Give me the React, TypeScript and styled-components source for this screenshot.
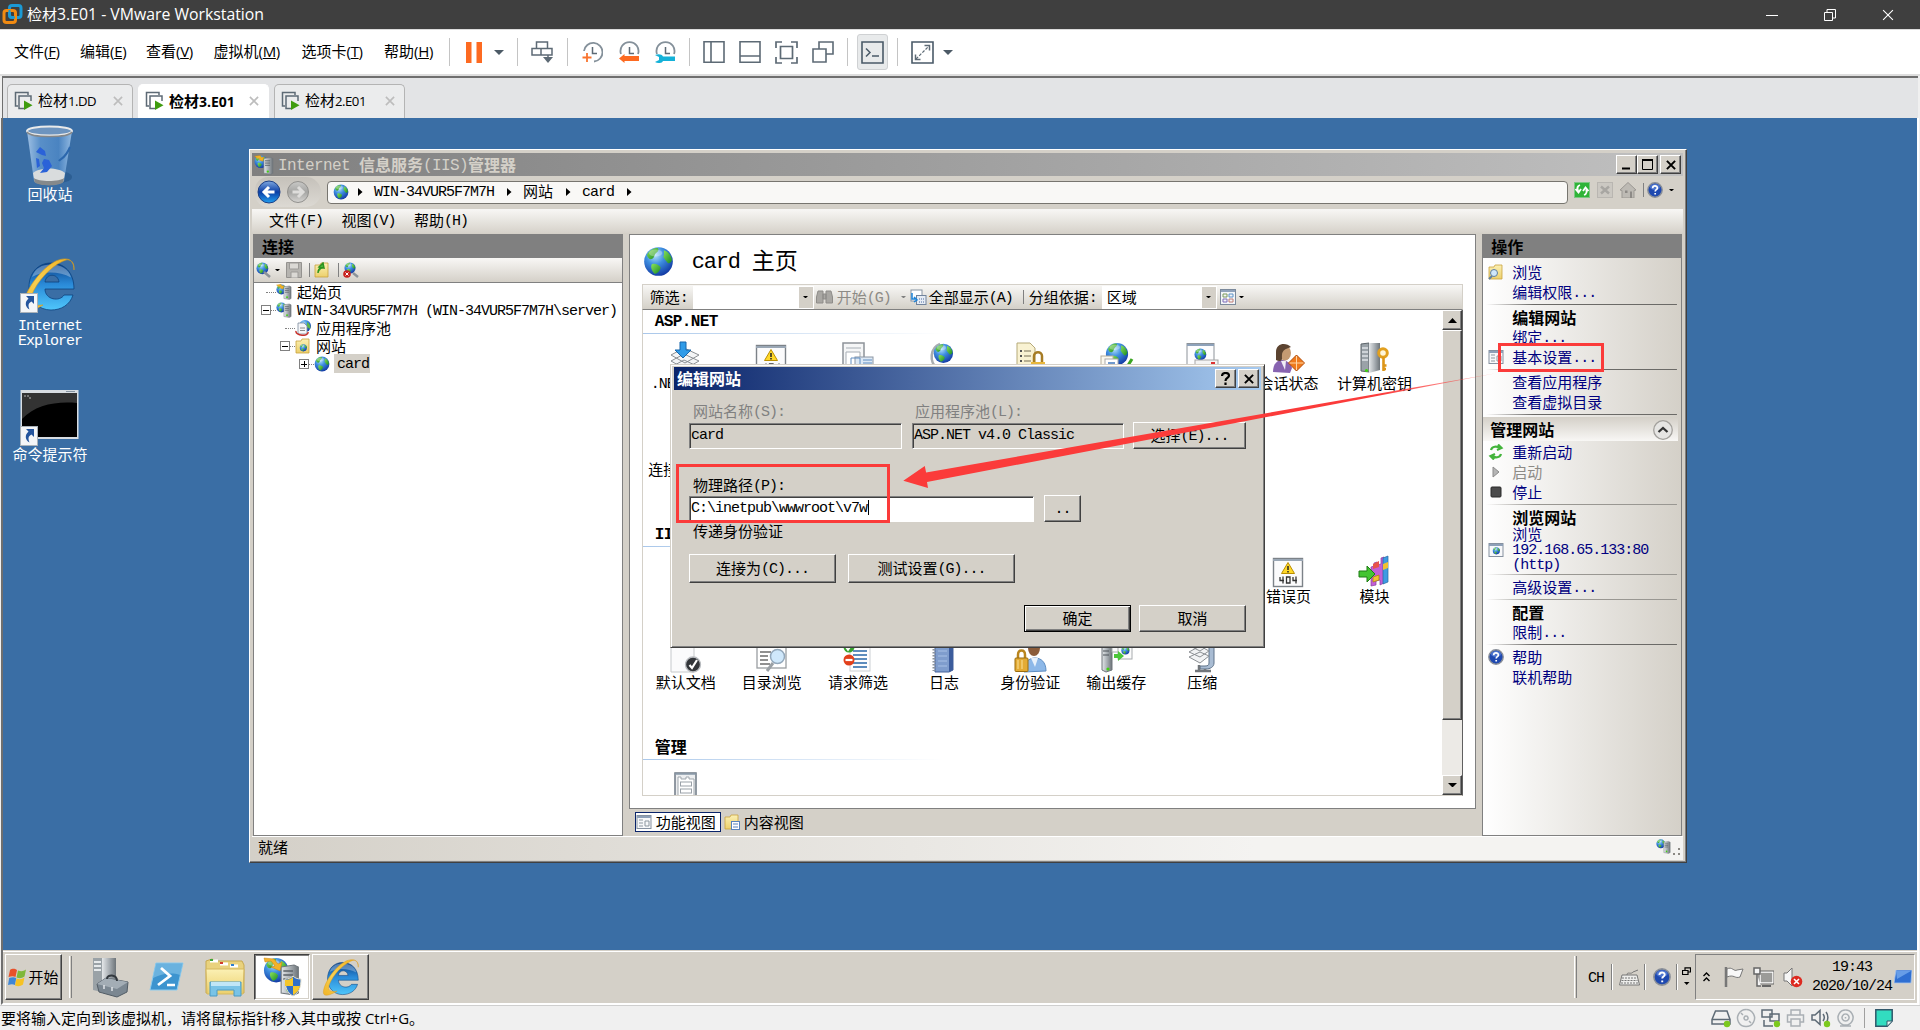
import React from 'react';
import styled, { createGlobalStyle, css } from 'styled-components';

const CJK = "'Noto Sans CJK SC', sans-serif";
const MONO = "'Liberation Mono', 'Noto Sans CJK SC', monospace";
const UI = "'Open Sans', 'Noto Sans CJK SC', sans-serif";
const FACE = '#d4d0c8';

const Global = createGlobalStyle`
  * { box-sizing: border-box; }
  html, body { margin: 0; padding: 0; overflow: hidden; }
  body { width: 1920px; height: 1030px; background: #f0f0f0; font-family: ${CJK}; }
  svg { display: block; flex: none; }
`;

/* ---------- text ---------- */

const TextBox = styled.span<{ $size: number; $bold?: boolean; $color?: string }>`
  display: block;
  flex: none;
  white-space: pre;
  line-height: 1;
  margin: ${p => (p.$bold ? '0' : '-1px 0 1px')};
  font-family: ${CJK};
  font-size: ${p => p.$size}px;
  font-weight: ${p => (p.$bold ? 700 : 400)};
  color: ${p => p.$color || 'inherit'};
`;
const Latin = styled.span<{ $size: number; $ui?: boolean; $ls?: number; $light?: boolean }>`
  line-height: 0;
  font-family: ${p => (p.$ui ? UI : MONO)};
  font-size: ${p => p.$size}px;
  letter-spacing: ${p => p.$ls || 0}px;
  vertical-align: ${p => (p.$ui ? '0' : '1px')};
  ${p => p.$light && css`font-weight: 400;`}
`;
const Key = styled.u`
  text-decoration: underline;
  text-underline-offset: 1px;
`;

type TProps = {
  children: string; size?: number; latin?: number; bold?: boolean; color?: string;
  ui?: boolean; ls?: number; light?: boolean;
};
/* Chinese runs and Latin runs have separate sizes, as in a bitmap UI font. */
const T = ({ children, size, latin, bold, color, ui, ls, light }: TProps) => {
  const cjk = size ?? (bold ? 16 : 15);
  const lat = latin ?? (bold ? 16 : 15);
  const space = ls ?? (ui ? 0 : bold ? -0.6 : -1);
  const runs = children.match(/[\u3000-\u9fff\uff00-\uffef]+|[^\u3000-\u9fff\uff00-\uffef]+/g) || [];
  return (
    <TextBox $size={cjk} $bold={bold} $color={color}>
      {runs.map((r, i) =>
        /[\u3000-\u9fff\uff00-\uffef]/.test(r) ? (
          <React.Fragment key={i}>{r}</React.Fragment>
        ) : (
          <Latin key={i} $size={lat} $ui={ui} $ls={space} $light={light}>{r}</Latin>
        )
      )}
    </TextBox>
  );
};

/* ---------- shared bevels ---------- */

const raised = css`
  background: ${FACE};
  border: 1px solid;
  border-color: #fff #404040 #404040 #fff;
  box-shadow: inset -1px -1px 0 #808080;
`;
const sunken = css`
  border: 1px solid;
  border-color: #808080 #fff #fff #808080;
  box-shadow: inset 1px 1px 0 #404040;
`;

/* ---------- drawings ---------- */

type IcoProps = { w?: number; h?: number; vb?: string; children: React.ReactNode };
const Ico = ({ w = 16, h, vb, children }: IcoProps) => (
  <svg width={w} height={h ?? w} viewBox={vb || `0 0 ${w} ${h ?? w}`} fill="none">{children}</svg>
);

const HiddenSvg = styled.svg`position: absolute;`;
const Defs = () => (
  <HiddenSvg width="0" height="0">
    <defs>
      <radialGradient id="sea" cx=".38" cy=".28" r=".8">
        <stop offset="0" stopColor="#b5e3fb" /><stop offset=".4" stopColor="#3f8fe0" /><stop offset="1" stopColor="#0c2f9c" />
      </radialGradient>
      <linearGradient id="land" x1="0" y1="0" x2="1" y2="1">
        <stop offset="0" stopColor="#8be35b" /><stop offset="1" stopColor="#188a20" />
      </linearGradient>
      <linearGradient id="steel" x1="0" y1="0" x2="1" y2="0">
        <stop offset="0" stopColor="#e4e7e9" /><stop offset=".5" stopColor="#a9afb4" /><stop offset="1" stopColor="#6d7479" />
      </linearGradient>
      <linearGradient id="ie" x1="0" y1="0" x2="0" y2="1">
        <stop offset="0" stopColor="#0a3f86" /><stop offset=".45" stopColor="#2a8ad8" /><stop offset="1" stopColor="#4fc6fb" />
      </linearGradient>
      <linearGradient id="gold" x1="1" y1="0" x2="0" y2="1">
        <stop offset="0" stopColor="#f2b21f" /><stop offset=".6" stopColor="#f7cf52" /><stop offset="1" stopColor="#f0b428" />
      </linearGradient>
      <linearGradient id="folder" x1="0" y1="0" x2="0" y2="1">
        <stop offset="0" stopColor="#fbf0b4" /><stop offset="1" stopColor="#ecd06c" />
      </linearGradient>
      <linearGradient id="blueball" x1="0" y1="0" x2="0" y2="1">
        <stop offset="0" stopColor="#7fa8e0" /><stop offset=".5" stopColor="#0b3ea6" /><stop offset="1" stopColor="#22a0f0" />
      </linearGradient>
      <linearGradient id="greyball" x1="0" y1="0" x2="0" y2="1">
        <stop offset="0" stopColor="#c9c9c7" /><stop offset=".5" stopColor="#a5a5a3" /><stop offset="1" stopColor="#d6d5d2" />
      </linearGradient>
      <linearGradient id="glass" x1="0" y1="0" x2="1" y2="0">
        <stop offset="0" stopColor="#a8c8ea" /><stop offset=".3" stopColor="#5c93cc" /><stop offset=".7" stopColor="#4c86c4" /><stop offset="1" stopColor="#9cc2e8" />
      </linearGradient>
      <linearGradient id="tail" gradientUnits="userSpaceOnUse" x1="1380" y1="0" x2="1498" y2="0">
        <stop offset="0" stopColor="#fb3b3a" /><stop offset="1" stopColor="#fb3b3a" stopOpacity=".35" />
      </linearGradient>
    </defs>
  </HiddenSvg>
);

const GlobeArt = () => (
  <>
    <circle cx="8" cy="8" r="7.4" fill="url(#sea)" />
    <path d="M2 4.600C3.400 2 5.600.9 7.600 1c1 1.400-.2 2-1 2.800-.9 1-.6 2-1.800 2.800C3.600 7.400 2.600 6.200 2 4.600z" fill="url(#land)" />
    <path d="M4.500 9.400c1.800-.6 3.500.2 4.600 1.600-.2 1.900-1.600 3.200-3 3.400-1.300-1.200-2.400-3.200-1.600-5z" fill="url(#land)" />
    <path d="M10.800 2.200c2 .6 3.800 2.600 4.200 5-.6 1.400-1.400 2-2.200 1.600-.8-1-1.600-1.800-2.400-3.200.8-1 .2-2 .4-3.400z" fill="url(#land)" />
    <ellipse cx="6.500" cy="3.600" rx="3.500" ry="1.800" fill="#fff" opacity=".3" />
  </>
);
const Globe = ({ s = 16 }: { s?: number }) => <Ico w={s} vb="0 0 16 16"><GlobeArt /></Ico>;

const TowerArt = () => (
  <>
    <path d="M1 1.500 7 .5l2 1v13l-2 1-6-1z" fill="url(#steel)" stroke="#70777c" strokeWidth=".5" />
    <path d="M2 3.500h4.500M2 5.500h4.500M2 7.500h4.500" stroke="#5b6267" strokeWidth=".8" />
    <circle cx="4.500" cy="13" r="1" fill="#3fd20f" />
  </>
);
const ServerGlobe = ({ s = 16, star }: { s?: number; star?: boolean }) => (
  <Ico w={s} vb="0 0 16 16">
    <g transform="translate(0 0) scale(.68)"><GlobeArt /></g>
    <g transform="translate(7 1.500) scale(.9)"><TowerArt /></g>
    {star && <path d="M.5 1 5 .3 6 2l1.800-.6L7 5 4 4l1-1-2.500-.4z" fill="#f4b223" stroke="#c98208" strokeWidth=".3" />}
  </Ico>
);

const VmLogo = () => (
  <Ico w={21}>
    <rect x="7.500" y="1.500" width="11.500" height="12" rx="2.500" stroke="#1b9ad6" strokeWidth="3" />
    <rect x="2" y="6.500" width="11.500" height="12" rx="2.500" stroke="#f08a12" strokeWidth="3" />
    <path d="M7.500 6v6.500a1 1 0 0 0 1 1H13" stroke="#1b9ad6" strokeWidth="2" />
  </Ico>
);

const Caret = ({ w = 10, color = '#4c5a66' }: { w?: number; color?: string }) => (
  <Ico w={w} h={w / 2} vb="0 0 10 5"><path d="M0 0h10L5 5z" fill={color} /></Ico>
);
const RightTri = () => <Ico w={5} h={8}><path d="M0 0l4.500 4L0 8z" fill="#000" /></Ico>;

const ink = '#5d6a75';
const ClockArt = ({ full }: { full?: boolean }) => (
  <>
    <path d={full ? 'M13 20.500A9.300 9.300 0 1 0 3 10' : 'M3 13A9 9 0 1 1 20 13'} stroke="#84909a" strokeWidth="1.800" />
    <path d="M11.500 6v6.500H16" stroke={ink} strokeWidth="1.500" />
  </>
);

const VmTabIcon = () => (
  <Ico w={19}>
    <path d="M4 15H1.500V1.500H14V4" stroke={ink} strokeWidth="1.500" />
    <path d="M10 17.500H5V5h12v5" stroke={ink} strokeWidth="1.500" />
    <path d="M10 9.500l8.500 4.700-8.500 4.800z" fill="#3f9c0f" />
  </Ico>
);

const RecycleBin = () => (
  <Ico w={50} h={61}>
    <ellipse cx="33" cy="52" rx="14" ry="6" fill="#1e4d80" opacity=".5" />
    <path d="M2 6l7 50c4 5 26 5 30 0l8-50z" fill="url(#glass)" opacity=".9" />
    <path d="M8 48c6-6 26-6 32 0l-1.500 8c-4 5-25 5-29 0z" fill="#d9dcdd" />
    <path d="M9 53c4 4 26 4 30 0l-.6 4c-4 4.500-25 4.500-29 0z" fill="#85898b" />
    <path d="M11 27l4-5 5 4 1 5-4-1zM11 33l3 1 1 7-3 2zM17 38l2-4 5 1 3 6-5 6-7 1 4-5z" fill="#2a62d8" />
    <path d="M45 22C40 34 36 33 34 36" stroke="#2b67ad" strokeWidth="2" />
    <ellipse cx="24.500" cy="6" rx="22.500" ry="4.500" fill="#6d94bf" stroke="#e9eaea" strokeWidth="2" />
    <path d="M2 7c4 6 41 6 45 0" stroke="#84878a" strokeWidth="1.500" />
  </Ico>
);
const IeArt = () => (
  <>
    <path d="M54 34H25c0 11 15 13 19 6h9C50 50 41 55 31 55 18 55 9 45 9 32 9 18 18 8 31 8s23 9 23 26zM25 27h14c-1-9-13-9-14 0z" fill="url(#ie)" stroke="#0c437f" strokeWidth=".8" />
    <path d="M12 22C15 13 22 9.500 31 9.500s18 4 20 13c-11-6-28-7-39-.5z" fill="#fff" opacity=".3" />
    <path d="M54 15C55 3 45 2 36 6 20 14 5 36 3 50c-1 8 6 8 20 0C8 52 9 45 14 35 22 20 36 8 46 5c5-1 8 3 8 10z" fill="url(#gold)" stroke="#d99a18" strokeWidth=".6" />
  </>
);
const Shortcut = () => (
  <g transform="translate(0 38)">
    <rect x=".5" y=".5" width="17" height="19" fill="#f4f6f8" stroke="#a9b2ba" />
    <path d="M6 3h8v8l-2.500-2.500C8 10.500 8 12.500 9.500 16.500 5 14 4.500 9 8.500 5.500z" fill="#24559d" />
  </g>
);
const DesktopIe = () => <Ico w={60}><IeArt /><Shortcut /></Ico>;
const DesktopCmd = () => (
  <Ico w={60} h={57}>
    <rect x=".5" y="1" width="58" height="49" fill="#d8dde2" />
    <rect x="2" y="4" width="55" height="44" fill="#000" />
    <path d="M2 30C15 16 36 12 57 14V4H2z" fill="#333" />
    <path d="M4 7h2M7 7h2M9 9h2" stroke="#b7b7b7" />
    <path d="M46 2.500h9" stroke="#8693a0" />
    <g transform="translate(0 -1)"><Shortcut /></g>
  </Ico>
);

const HelpBall = ({ s = 16 }: { s?: number }) => (
  <Ico w={s} vb="0 0 16 16">
    <circle cx="8" cy="8" r="7.200" fill="#1f49b0" stroke="#8a8f98" strokeWidth="1.400" />
    <ellipse cx="8" cy="5" rx="5" ry="3" fill="#6d93e4" opacity=".6" />
    <path d="M5.700 6.200c0-3 4.700-2.900 4.700-.2 0 1.700-2.200 1.600-2.200 3.400M8.200 11v1.600" stroke="#fff" strokeWidth="1.700" />
  </Ico>
);

const Page404Art = () => (
  <>
    <rect x="1.500" y="3.500" width="29" height="28" fill="#fbfbfc" stroke="#7c8288" strokeWidth="1.400" />
    <path d="M1 5h30" stroke="#9aa7b5" strokeWidth="2" />
    <path d="M16 7.500l6.500 11h-13z" fill="#ffd829" stroke="#ba8e00" />
    <path d="M16 11v4M16 16v1.500" stroke="#222" strokeWidth="1.500" />
    <path d="M8 22v3.500h4M11 21.500v7M14.500 22h3.500v6h-3.500zM21 22v3.500h4M24 21.500v7" stroke="#333" strokeWidth="1.300" />
  </>
);

const features: Record<string, React.ReactNode> = {
  compile: (
    <>
      <path d="M2 25l13-7 15 7-14 8z M2 19l13-7 15 7-14 8z M2 13l13-7 15 7-14 8z" fill="#f4f5f6" stroke="#8b8f93" />
      <path d="M11 0h6v8h5l-8 8-8-8h5z" fill="#2f9be8" stroke="#1767ad" />
    </>
  ),
  error: <Page404Art />,
  pages: (
    <>
      <rect x="2" y="1" width="21" height="30" fill="#f5f6f7" stroke="#8d9399" strokeWidth="1.500" />
      <path d="M5 6h15M5 10h14v14H5z" stroke="#a7aeb5" fill="#fff" />
      <rect x="14" y="15" width="18" height="16" fill="#dde9f5" stroke="#8b96a3" />
      <path d="M10 16h9v7h-9zM22 18h9M22 21h9" stroke="#5f8cc0" />
    </>
  ),
  world: (
    <>
      <path d="M12 2C2 6 1 20 9 26" stroke="#a9adb0" strokeWidth="2.500" />
      <g transform="translate(5 1) scale(1.300)"><GlobeArt /></g>
    </>
  ),
  rules: (
    <>
      <path d="M3 1h13l5 5v24H3z" fill="#f9f2d2" stroke="#b5a978" />
      <path d="M10 9h7M10 14h7M10 19h7" stroke="#776f55" /><path d="M6 8h2v2H6zM6 13h2v2H6zM6 18h2v2H6z" fill="#555" />
      <path d="M20 20v-6c0-5 8-5 8 0v6" stroke="#a67c25" strokeWidth="2.500" /><rect x="17" y="20" width="14" height="11" fill="#e8b73c" />
    </>
  ),
  profile: (
    <>
      <g transform="translate(5 0) scale(1.500)"><GlobeArt /></g>
      <rect x="1" y="14" width="12" height="16" fill="#fbf8ee" stroke="#b5ae9a" /><rect x="5" y="17" width="13" height="14" fill="#fff" stroke="#aaa" />
      <path d="M8 21h7" stroke="#3f77bd" strokeWidth="1.500" /><path d="M27 25l5-8" stroke="#3ba522" strokeWidth="3" />
    </>
  ),
  smtp: (
    <>
      <rect x="1" y="1.500" width="27" height="28" fill="#fdfdfe" stroke="#8d939a" /><path d="M1 3h27" stroke="#8ea2ba" strokeWidth="2" />
      <g transform="translate(8 6) scale(.8)"><GlobeArt /></g>
      <rect x="9" y="18" width="23" height="13" fill="#f4f4f4" stroke="#a5a5a5" /><rect x="25" y="20" width="4" height="4" fill="#d33" />
    </>
  ),
  session: (
    <>
      <path d="M1 30c0-9 5-12 9-12s9 3 10 8l-2 5z" fill="#8763b0" />
      <path d="M9 19h5l-1 9z" fill="#f1edf6" />
      <ellipse cx="13" cy="11" rx="6" ry="7.500" fill="#c49a72" />
      <path d="M19 5C14 0 4 1 4 10v8c3 2 6 1 6-1 0-6-1-9 9-12z" fill="#5b4330" />
      <path d="M24.500 13l8 8-8 8-8-8z" fill="#ef7a1c" stroke="#b04a08" /><path d="M24.500 14v14M17.500 21h14" stroke="#ffd6a6" />
    </>
  ),
  machine: (
    <>
      <path d="M3 2l8-1v29l-8-1z" fill="#9aa2a8" stroke="#5d656b" /><path d="M11 1h11v27l-11 3z" fill="url(#steel)" />
      <path d="M4 6h6M4 10h6M4 14h6M4 18h6" stroke="#dfe4e7" strokeWidth="1.500" /><circle cx="8.500" cy="28.500" r="1.600" fill="#3fd20f" />
      <circle cx="25" cy="11" r="4.300" fill="#fff6da" stroke="#e2a01f" strokeWidth="3" /><path d="M25.500 15v14M26 23.500h2.500M26 27h2" stroke="#dd9619" strokeWidth="2.600" />
    </>
  ),
  modules: (
    <>
      <path d="M13 12l3-1V8l3-1v3l4-1V3l3-1v26l-4 2v-5l-4 1v4l-5 1z" fill="#c25fd6" stroke="#8a3c9e" strokeWidth=".7" />
      <path d="M15 9l6-3v6l-6 2z" fill="#e7544a" /><path d="M15 22l6-2v5l-6 2z" fill="#f1c230" stroke="#a87f0b" strokeWidth=".7" />
      <path d="M1 16h8v-5l8 8-8 8v-5H1z" fill="#43c432" stroke="#1f7d14" />
      <path d="M25 3l5-2v26l-5 2z" fill="#3d9be3" stroke="#27699d" strokeWidth=".7" /><path d="M25 9l5-2v6l-5 2z" fill="#f1c230" />
    </>
  ),
  document: (
    <>
      <path d="M2 0h17l6 6v25H2z" fill="#fbfbfc" stroke="#c6c9cc" />
      <circle cx="24" cy="23.500" r="7.500" fill="#33363a" stroke="#b9bcc0" strokeWidth="1.300" />
      <path d="M20.500 24l2.500 3 5-8" stroke="#fff" strokeWidth="2.200" />
    </>
  ),
  browse: (
    <>
      <rect x="2" y="0" width="29" height="27" fill="#fff" stroke="#9a9ea2" strokeWidth="1.300" />
      <path d="M2 6h29M2 2h29" stroke="#a5abb1" />
      <path d="M5 11h11M5 15h8M5 19h8M5 23h10" stroke="#222" strokeWidth="1.200" />
      <path d="M18 22l-6 8" stroke="#9aa0a5" strokeWidth="3" /><circle cx="22.500" cy="15.500" r="7" fill="#cfe8fb" stroke="#93a8bb" strokeWidth="1.500" />
    </>
  ),
  filter: (
    <>
      <rect x="9" y="0" width="20" height="30" fill="#fdfdfe" stroke="#ccd0d4" />
      <path d="M12 5h13M12 10h14M12 14h14M12 18h14M12 22h14M12 26h14" stroke="#2867a8" strokeWidth="1.400" />
      <circle cx="8" cy="6" r="5.500" fill="#37a32d" /><path d="M5 6l2 3 4-6" stroke="#fff" strokeWidth="1.800" />
      <circle cx="8" cy="19" r="5.500" fill="#e2401b" /><path d="M4.500 19h7" stroke="#fff" strokeWidth="2.200" />
    </>
  ),
  log: (
    <>
      <path d="M7 0h18v29l-4 2H7z" fill="#7f9dcd" stroke="#46629a" /><path d="M21 1h4v28l-4 2z" fill="#3c5c9c" />
      <path d="M10 5h9M10 10h9M10 15h9M10 20h9M10 25h9" stroke="#a9c1e6" /><path d="M6 2v28" stroke="#8c949e" strokeWidth="3" strokeDasharray="1.500 1.500" />
    </>
  ),
  auth: (
    <>
      <path d="M10 31c0-10 5-14 11-14s11 4 11 13z" fill="#8db8e8" stroke="#5e8dc2" /><path d="M17 17h7l-3 9z" fill="#e8f1fb" />
      <ellipse cx="20" cy="7" rx="6" ry="8" fill="#8b5c3a" /><path d="M14 3c2-6 10-5 12 1l-5 1z" fill="#3b2618" />
      <path d="M4 18v-4c0-6 7-6 7 0v4" stroke="#b9851e" strokeWidth="2.500" /><rect x="1" y="17" width="13" height="13.500" rx="1" fill="#e3ab35" stroke="#9b6d0f" />
      <path d="M4 19v9M8 19v9" stroke="#fbe29a" />
    </>
  ),
  cache: (
    <>
      <path d="M2 2h10v27l-6 2-4-2z" fill="url(#steel)" stroke="#70777c" /><path d="M3 6h6M3 10h6M3 14h6" stroke="#4c5358" /><circle cx="8" cy="28" r="1.600" fill="#3fd20f" />
      <rect x="12" y="0" width="9" height="11" fill="#fbfbfb" stroke="#a7abae" /><rect x="18" y="1" width="14" height="17" fill="#fbfbfb" stroke="#a7abae" />
      <g transform="translate(21 5) scale(.55)"><GlobeArt /></g><path d="M14 13h4v-3l6 5-6 5v-3h-4z" fill="#4cc63a" />
    </>
  ),
  compress: (
    <>
      <path d="M23 0h5v22c0 4-4 6-8 6h-6v-3h5c3 0 4-1 4-3z" fill="#a9bcd3" stroke="#5f7389" />
      <path d="M3 16l11-5 9 4-9 7zM3 11l11-6 9 5-9 6zM4 5l10-6 9 5-9 6z" fill="#f2f3f4" stroke="#8b8f93" />
      <path d="M9 30h16M13 24v6M19 28v3" stroke="#71767b" strokeWidth="2.500" />
    </>
  ),
  config: (
    <>
      <rect x="6" y="5" width="21" height="28" fill="#eceef0" stroke="#6f7a85" strokeWidth="1.500" />
      <path d="M6 6h21" stroke="#8998a8" strokeWidth="1.500" />
      <path d="M9 9h3v2h5V9h3v2h5v18H9z" fill="#fff" stroke="#a0a7ad" /><rect x="11.500" y="14" width="11" height="4" stroke="#9aa1a8" /><rect x="11.500" y="21" width="11" height="4" stroke="#9aa1a8" />
      <path d="M12 30.500h4" stroke="#22a5dd" strokeWidth="2" /><path d="M17 30.500h8" stroke="#b5babf" strokeWidth="2" strokeDasharray="3 1" />
    </>
  ),
  none: null,
};

/* ---------- host window ---------- */

const Host = styled.div`
  width: 1920px; height: 1030px; display: flex; flex-direction: column; background: #f0f0f0; color: #000;
`;
const HostTitle = styled.header`
  height: 29px; background: #3f3f3f; color: #fff; display: flex; align-items: center; padding-left: 2px; gap: 4px;
`;
const HostControls = styled.div`
  margin-left: auto; display: flex; gap: 46px; padding-right: 26px; align-items: center;
`;
const HostBar = styled.div`
  height: 47px; background: #fff; border-top: 1px solid #dcdcdc; border-bottom: 2px solid #dedede;
  display: flex; align-items: center; padding-left: 14px;
`;
const HostMenu = styled.div<{ $w: number }>`
  width: ${p => p.$w}px; flex: none;
  display: flex; align-items: center; height: 20px; padding-bottom: 2px;
`;
const Tool = styled.div<{ $ml: number; $pressed?: boolean }>`
  margin-left: ${p => p.$ml}px; flex: none;
  ${p => p.$pressed && css`
    width: 31px; height: 36px; display: flex; align-items: center; justify-content: center;
    background: #e8eaeb; border: 1px solid #cfd1d3; border-radius: 3px;
  `}
`;
const ToolSep = styled.div<{ $ml: number }>`
  width: 1px; height: 28px; background: #c4c4c4; margin-left: ${p => p.$ml}px; flex: none;
`;
const TabStrip = styled.div`
  height: 42px; margin-left: 2px; background: #e3e4e6; border-top: 2px solid #6f6f6f; border-left: 1px solid #6f6f6f;
  display: flex; align-items: flex-end; padding-left: 4px; gap: 5px; width: 1916px;
`;
const Tab = styled.div<{ $w: number; $on?: boolean }>`
  width: ${p => p.$w}px; height: 34px; display: flex; align-items: center; padding: 0 9px 2px 6px;
  border: 1px solid ${p => (p.$on ? '#fff' : '#b4b4b4')}; border-bottom: 0; border-radius: 5px 5px 0 0;
  background: ${p => (p.$on ? '#fff' : '#ebeced')};
  > span { margin-left: 5px; }
  > svg:last-child { margin-left: auto; }
`;
const Guest = styled.main`
  height: 887px; margin: 0 1px 0 1px; border-left: 2px solid #6f6f6f; border-right: 2px solid #fff; border-bottom: 2px solid #fff;
  display: flex; flex-direction: column; position: relative;
`;
const HostStatus = styled.footer`
  flex: 1; border-top: 1px solid #cfcfcf; background: #f0f0f0; display: flex; align-items: center; padding: 0 27px 0 1px;
`;
const StatusIcons = styled.div`
  margin-left: auto; display: flex; align-items: center; gap: 5px;
`;
const StatusSep = styled.div`width: 1px; height: 20px; background: #9f9f9f; margin: 0 5px 0 3px;`;

const menus: [string, string, number][] = [
  ['文件', 'F', 66], ['编辑', 'E', 66], ['查看', 'V', 67.5], ['虚拟机', 'M', 88], ['选项卡', 'T', 82.5], ['帮助', 'H', 65],
];

const HostToolbar = () => (
  <HostBar>
    {menus.map(([name, key, w]) => (
      <HostMenu key={key} $w={w}>
        <T>{name}</T>
        <TextBox $size={15}><Latin $size={15} $ui $ls={-0.3}>(<Key>{key}</Key>)</Latin></TextBox>
      </HostMenu>
    ))}
    <ToolSep $ml={0} />
    <Tool $ml={16}><Ico w={16} h={21}><path d="M0 0h5.500v21H0zM10.500 0H16v21h-5.500z" fill="#fd6a21" /></Ico></Tool>
    <Tool $ml={12}><Caret /></Tool>
    <ToolSep $ml={13} />
    <Tool $ml={13}>
      <Ico w={22}><path d="M5.500 7.500V1h11v6.500M1 7.500h20V14H1zM10 7.500V14M17 14v6" stroke={ink} strokeWidth="1.500" /><path d="M12 16h10l-5 6z" fill={ink} /></Ico>
    </Tool>
    <ToolSep $ml={14} />
    <Tool $ml={13}><Ico w={22}><ClockArt full /><path d="M6 12v9M1.500 16.500h9" stroke="#f9742f" strokeWidth="1.800" /></Ico></Tool>
    <Tool $ml={15}><Ico w={22}><ClockArt /><path d="M1 17.500l5.500-4.500v2H21v5H6.500v2z" fill="#fd6a21" /></Ico></Tool>
    <Tool $ml={14}><Ico w={22}><ClockArt /><path d="M1 14c3-1.500 7-1 8 1.500h12V20H9C8 22.500 4 22.500 1 21l4-2v-3z" fill="#14b1d8" /></Ico></Tool>
    <ToolSep $ml={13} />
    <Tool $ml={13}><Ico w={22}><path d="M1 .800h20v20.400H1zM8 1v20" stroke={ink} strokeWidth="1.600" /></Ico></Tool>
    <Tool $ml={14}><Ico w={22}><path d="M1 .800h20v20.400H1zM1 15h20" stroke={ink} strokeWidth="1.600" /></Ico></Tool>
    <Tool $ml={14}><Ico w={23}><path d="M1 7V1h6M16 1h6v6M22 16v6h-6M7 22H1v-6M5.500 5.500h12v12h-12z" stroke={ink} strokeWidth="1.700" /></Ico></Tool>
    <Tool $ml={14}><Ico w={22}><path d="M1 8h13v13H1zM7 8V1h14v12h-7" stroke={ink} strokeWidth="1.600" /></Ico></Tool>
    <ToolSep $ml={13} />
    <Tool $ml={9} $pressed><Ico w={23}><path d="M1 1h21v21H1z" stroke="#4a5a68" strokeWidth="1.600" /><path d="M5 7.500l4 4-4 4M11 15h7" stroke="#4a5a68" strokeWidth="1.500" /></Ico></Tool>
    <ToolSep $ml={9} />
    <Tool $ml={13}><Ico w={23}><path d="M1 1h21v21H1z" stroke="#4a5a68" strokeWidth="1.600" /><path d="M13.500 4.500h5v5M4.500 13.500v5h5" stroke={ink} strokeWidth="1.500" /><path d="M5 18L18 5" stroke={ink} strokeWidth="1.200" strokeDasharray="3 1.500" /></Ico></Tool>
    <Tool $ml={9}><Caret /></Tool>
  </HostBar>
);

const tabs = [
  { name: '检材1.DD', w: 126 }, { name: '检材3.E01', w: 131, on: true }, { name: '检材2.E01', w: 131 },
];

/* ---------- guest desktop ---------- */

const Desktop = styled.div`
  height: 832px; background: #3a6ea5; position: relative; overflow: hidden;
`;
const DeskIcon = styled.div<{ $top: number }>`
  position: absolute; left: -3px; top: ${p => p.$top}px; width: 100px; color: #fff;
  display: flex; flex-direction: column; align-items: center;
`;
const DeskLabel = styled.div<{ $mt?: number }>`
  margin-top: ${p => p.$mt ?? 1}px; display: flex; flex-direction: column; align-items: center;
`;

const Taskbar = styled.div`
  height: 53px; background: ${FACE}; border-top: 1px solid ${FACE}; box-shadow: inset 0 1px 0 #fff;
  display: flex; align-items: center; padding: 0 2px; 
`;
const TaskButton = styled.div<{ $w: number; $ml: number; $on?: boolean }>`
  width: ${p => p.$w}px; height: 46px; margin-left: ${p => p.$ml}px; flex: none;
  display: flex; align-items: center; justify-content: center; gap: 1px;
  ${raised}
  ${p => p.$on && css`
    background: #fff; border-color: #404040 #fff #fff #404040; box-shadow: inset 1px 1px 0 #808080, inset -1px -1px 0 ${FACE};
  `}
`;
const Quick = styled.div<{ $ml: number }>`margin-left: ${p => p.$ml}px; flex: none;`;
const Groove = styled.div<{ $ml: number; $h?: number }>`
  width: 3px; height: ${p => p.$h || 42}px; margin-left: ${p => p.$ml}px; flex: none;
  border-left: 1px solid #fff; border-right: 1px solid #808080; background: ${FACE};
`;
const GrooveIn = styled(Groove)`width: 2px; border-left-color: #808080; border-right-color: #fff;`;
const Tray = styled.div`
  width: 220px; height: 46px; margin-left: 4px; border: 1px solid; border-color: #808080 #fff #fff #808080;
  display: flex; align-items: center; padding-left: 7px; flex: none;
`;
const Clock = styled.div`
  display: flex; flex-direction: column; align-items: center; gap: 4px; margin-left: 9px; padding-bottom: 2px;
`;

/* ---------- IIS window ---------- */

const IisWindow = styled.section`
  position: absolute; left: 246px; top: 31px; width: 1438px; height: 714px; background: ${FACE};
  border: 1px solid; border-color: #fff #404040 #404040 #fff; box-shadow: inset -1px -1px 0 #808080;
  padding: 3px 3px 2px 2px; display: flex; flex-direction: column;
`;
const WinTitle = styled.div<{ $active?: boolean }>`
  height: 23px; flex: none; display: flex; align-items: center; padding: 0 2px;
  background: ${p => (p.$active ? 'linear-gradient(90deg,#0a246a,#a6caf0)' : 'linear-gradient(90deg,#808080,#c0c0c0)')};
  color: ${p => (p.$active ? '#fff' : FACE)};
  > span { padding-bottom: 2px; margin-left: 1px; }
  > svg + span { margin-left: 4px; }
`;
const WinButtons = styled.div`margin-left: auto; display: flex;`;
const WinButton = styled.div<{ $ml?: number }>`
  ${raised} width: 21px; height: 19px; margin-left: ${p => p.$ml || 0}px; display: flex; align-items: center; justify-content: center;
`;
const NavRow = styled.div`height: 33px; flex: none; display: flex; align-items: center; padding: 0 0 1px 3px;`;
const NavButtons = styled.div`
  width: 66px; height: 30px; display: flex; align-items: center; gap: 5px; padding-left: 2px;
  background: linear-gradient(#c5c1ba, #dcd9d3); border-radius: 14px 16px 16px 14px; flex: none;
`;
const Address = styled.div`
  width: 1241px; height: 23px; margin-left: 6px; border: 1px solid #77756f; border-radius: 4px; background: #f9f8f6;
  display: flex; align-items: center; padding: 0 0 1px 5px; flex: none;
  > span { margin-left: 11px; margin-right: 13px; }
  > svg + svg { margin-left: 9px; }
`;
const NavTools = styled.div`
  display: flex; align-items: center; gap: 7px; margin-left: 6px; padding-bottom: 4px;
`;
const NavHelp = styled.div`
  display: flex; align-items: center; gap: 6px; margin-left: 3px; padding-bottom: 4px;
`;
const ThinSep = styled.div`width: 1px; height: 14px; background: #808080; flex: none;`;
const IisMenu = styled.div`
  height: 24px; flex: none; background: linear-gradient(#f8f7f5, #d6d2ca); display: flex; align-items: center;
  padding: 0 0 2px 17px; gap: 18.500px;
`;
const Body = styled.div`height: 603px; flex: none; display: flex; padding: 1px 1px 0 1px;`;
const PanelHead = styled.div`
  height: 24px; background: #808080; display: flex; align-items: center; padding-left: 8px; flex: none;
`;
const Connections = styled.div`
  width: 370px; background: #fff; border: 1px solid #808080; border-top: 0; display: flex; flex-direction: column;
`;
const ConnTools = styled.div`
  height: 25px; background: linear-gradient(#f8f7f5, #d4d0c8); border-bottom: 1px solid #808080;
  display: flex; align-items: center; padding-left: 2px; flex: none;
`;
const Gap = styled.div<{ $w?: number; $h?: number; $grow?: boolean }>`
  width: ${p => p.$w || 1}px; height: ${p => p.$h || 1}px; flex: ${p => (p.$grow ? 1 : 'none')};
`;
const TreeRow = styled.div<{ $pl: number; $sel?: boolean; $h?: number }>`
  height: ${p => p.$h || 18}px; display: flex; align-items: center; padding-left: ${p => p.$pl}px; flex: none;
  > svg { margin-right: 5px; }
  > span { ${p => p.$sel && css`background: ${FACE}; padding: 1px 1px 3px 3px; margin-left: -1px;`} }
`;
const Dots = styled.div<{ $w: number }>`width: ${p => p.$w}px; height: 1px; border-top: 1px dotted #808080; flex: none;`;
const Expander = styled.div<{ $plus?: boolean }>`
  width: 10px; height: 10px; border: 1px solid #808080; background:
    linear-gradient(#000, #000) center / 6px 1px no-repeat
    ${p => (p.$plus ? ', linear-gradient(#000,#000) center / 1px 6px no-repeat' : '')};
  flex: none;
`;
const Center = styled.div`width: 848px; margin-left: 6px; display: flex; flex-direction: column;`;
const Page = styled.div`
  height: 575px; background: #fff; border: 1px solid #808080; padding: 0 12px; display: flex; flex-direction: column; flex: none;
`;
const PageHead = styled.div`height: 49px; display: flex; align-items: center; gap: 18px; padding: 3px 0 0 1px; flex: none;`;
const HeadText = styled.div`padding-bottom: 2px;`;
const FilterBar = styled.div`
  height: 26px; border: 1px solid ${FACE}; border-bottom-color: #808080; background: linear-gradient(#f8f7f5, #d4d0c8);
  display: flex; align-items: center; padding-left: 7px; flex: none;
`;
const Combo = styled.div<{ $w: number; $ml: number }>`
  width: ${p => p.$w}px; margin-left: ${p => p.$ml}px; height: 23px; background: #fff; display: flex; align-items: center; padding-left: 5px; flex: none;
`;
const ComboArrow = styled.div`
  width: 14px; height: 21px; margin: 0 1px 0 auto; background: ${FACE}; display: flex; align-items: center; justify-content: center;
`;
const Features = styled.div`
  height: 486px; border: 1px solid ${FACE}; border-top: 0; border-right: 1px solid #606060; display: flex; flex: none;
`;
const FeatureList = styled.div`flex: 1; overflow: hidden;`;
const GroupHead = styled.div`
  height: 24px; display: flex; align-items: center; padding: 0 0 4px 12px;
  background: linear-gradient(90deg, #a9c7ea, #c6daf1 30%, #fff) left bottom / 300px 1px no-repeat;
`;
const Grid = styled.div`
  display: grid; grid-template-columns: repeat(9, 86.100px); grid-auto-rows: 86px; padding-top: 8px; margin-bottom: 9px;
`;
const Feature = styled.div`
  display: flex; flex-direction: column; align-items: center; gap: 2px; min-width: 0;
  > svg { overflow: visible; }
`;
const Scroll = styled.div`
  width: 20px; display: flex; flex-direction: column; background: #eceae6;
`;
const ScrollButton = styled.div`
  ${raised} height: 20px; display: flex; align-items: center; justify-content: center; flex: none;
`;
const Thumb = styled.div`${raised} height: 390px; flex: none;`;
const ViewTabs = styled.div`height: 26px; display: flex; align-items: center; padding-left: 6px; gap: 2px;`;
const ViewTab = styled.div<{ $on?: boolean }>`
  height: 20px; display: flex; align-items: center; gap: 4px; padding: 0 5px 0 1px;
  ${p => p.$on && css`background: #fff; outline: 1px solid #0a246a; outline-offset: -1px;`}
`;
const Actions = styled.div`
  width: 200px; margin-left: 6px; display: flex; flex-direction: column;
  background: linear-gradient(90deg, #fff, ${FACE}); border: 1px solid #808080; border-top: 0;
`;
const ActionRow = styled.div<{ $h?: number }>`
  height: ${p => p.$h || 20}px; display: flex; align-items: center; flex: none;
`;
const ActionIcon = styled.div`width: 24px; margin-left: 5px; flex: none;`;
const Lines = styled.div`display: flex; flex-direction: column;`;
const Rule = styled.div<{ $dark?: boolean }>`
  height: 5px; flex: none; margin: 0 4px 0 3px;
  background: linear-gradient(90deg, transparent, ${p => (p.$dark ? '#6b6a67' : '#999792')} 25%) center / 100% 1px no-repeat;
`;
const SectionBar = styled.div`
  height: 24px; margin: 0 3px 1px 0; display: flex; align-items: center; justify-content: space-between; padding: 2px 5px 0 7px;
  background: linear-gradient(#d4d0c8, #f8f7f5); flex: none;
  > span { padding-bottom: 2px; }
`;
const IisStatus = styled.div`
  flex: 1; border-top: 1px solid #fff; background: linear-gradient(90deg, #d4d0c8, #f4f3f1 70%);
  display: flex; align-items: center; justify-content: space-between; padding: 0 2px 2px 6px;
`;

/* ---------- dialog ---------- */

const Dialog = styled.section`
  position: absolute; left: 667px; top: 246px; width: 595px; height: 284px; background: ${FACE};
  border: 1px solid; border-color: ${FACE} #404040 #404040 ${FACE};
  box-shadow: inset 1px 1px 0 #fff, inset -1px -1px 0 #808080;
  padding: 2px 3px; display: flex; flex-direction: column;
`;
const Form = styled.div`display: flex; flex-direction: column; padding: 13px 14px 0 15px;`;
const FormRow = styled.div<{ $mt?: number; $h?: number }>`
  display: flex; align-items: center; margin-top: ${p => p.$mt || 0}px; height: ${p => (p.$h ? `${p.$h}px` : 'auto')};
`;
const Label = styled.div<{ $w?: number; $off?: boolean }>`
  width: ${p => (p.$w ? p.$w + 'px' : 'auto')}; padding-left: 4px; color: ${p => (p.$off ? '#808080' : '#000')};
`;
const Field = styled.div<{ $w: number; $mr: number; $edit?: boolean }>`
  ${sunken} width: ${p => p.$w}px; height: 26px; margin-right: ${p => p.$mr}px; background: ${p => (p.$edit ? '#fff' : FACE)};
  display: flex; align-items: center; padding: 0 0 3px 1px; flex: none;
`;
const TextCursor = styled.i`width: 1px; height: 15px; background: #000; margin-left: 1px;`;
const Button = styled.div<{ $w: number; $h?: number; $default?: boolean; $mr?: number }>`
  ${raised} width: ${p => p.$w}px; height: ${p => p.$h || 27}px; margin-right: ${p => p.$mr || 0}px; flex: none;
  display: flex; align-items: center; justify-content: center;
  ${p => p.$default && css`border-color: #000; box-shadow: inset 1px 1px 0 #fff, inset -1px -1px 0 #404040, inset -2px -2px 0 #808080;`}
`;

/* ---------- annotations ---------- */

const RedBox = styled.div<{ $x: number; $y: number; $w: number; $h: number }>`
  position: absolute; left: ${p => p.$x}px; top: ${p => p.$y}px; width: ${p => p.$w}px; height: ${p => p.$h}px;
  border: 3px solid #fb3b3a;
`;
const Arrow = styled.svg`position: absolute; left: 0; top: 0; pointer-events: none;`;

const XGlyph = ({ s = 11, color = '#000', w = 2.2 }: { s?: number; color?: string; w?: number }) => (
  <Ico w={s} vb="0 0 11 11"><path d="M1 1l9 9M10 1l-9 9" stroke={color} strokeWidth={w} /></Ico>
);

const F = ({ icon, label }: { icon: string; label?: string }) => (
  <Feature>
    <Ico w={33} h={32}>{features[icon]}</Ico>
    {label && <T>{label}</T>}
  </Feature>
);

const SmallPage = ({ globe }: { globe?: boolean }) => (
  <Ico w={16}>
    <rect x="1" y="1.500" width="14" height="13" fill="#f7f8fa" stroke="#8691a0" /><path d="M1 3h14" stroke="#8ea0b8" strokeWidth="2" />
    {globe ? <g transform="translate(4.500 5) scale(.48)"><GlobeArt /></g> : <path d="M3 6h4M3 9h4M3 12h4M9 7h4v5H9z" stroke="#8d979f" />}
  </Ico>
);

type Action = { t: string; icon?: React.ReactNode; bold?: boolean; off?: boolean };
const A = ({ t, icon, bold, off }: Action) => (
  <ActionRow>
    <ActionIcon>{icon}</ActionIcon>
    <T bold={bold} color={bold ? '#000' : off ? '#8d8b86' : '#00007f'}>{t}</T>
  </ActionRow>
);

const FolderSmall = ({ children }: { children?: React.ReactNode }) => (
  <Ico w={16}><path d="M1 3h5l1-2h7v14H1z" fill="url(#folder)" stroke="#c9a23c" strokeWidth=".8" />{children}</Ico>
);

const IisManager = () => (
  <IisWindow>
    <WinTitle>
      <ServerGlobe s={20} star />
      <T bold light size={16}>Internet 信息服务(IIS)管理器</T>
      <WinButtons>
        <WinButton><Ico w={9} h={11}><path d="M0 9.500h8" stroke="#000" strokeWidth="2" /></Ico></WinButton>
        <WinButton><Ico w={11}><path d="M.5 1h10v9.500H.5z" stroke="#000" /><path d="M0 1h11" stroke="#000" strokeWidth="2" /></Ico></WinButton>
        <WinButton $ml={2}><XGlyph s={10} /></WinButton>
      </WinButtons>
    </WinTitle>
    <NavRow>
      <NavButtons>
        <Ico w={24}><circle cx="12" cy="12" r="11" fill="url(#blueball)" stroke="#1c3f86" /><path d="M17.500 12H8M12 7l-5 5 5 5" stroke="#fff" strokeWidth="3" /></Ico>
        <Ico w={24}><circle cx="12" cy="12" r="10.500" fill="url(#greyball)" stroke="#92918e" /><path d="M6.500 12H16M12 7l5 5-5 5" stroke="#dedddb" strokeWidth="3" /></Ico>
      </NavButtons>
      <Address>
        <Globe /><RightTri /><T>WIN-34VUR5F7M7H</T><RightTri /><T>网站</T><RightTri /><T>card</T><RightTri />
      </Address>
      <NavTools>
        <Ico w={16}><rect x=".5" y=".5" width="15" height="15" fill="#2fb438" stroke="#7dc783" /><path d="M6 3C3 4 3 6 4 9M1.500 7L4.500 10.500 7 7M10 13c3-1 3-4 2-6M14.500 9l-3-3.500L9 9" stroke="#fff" strokeWidth="1.800" /></Ico>
        <Ico w={16}><rect x=".5" y=".5" width="15" height="15" fill="#cbc8c2" stroke="#b9b6b1" /><path d="M4 4.500l8 7M12 4.500l-8 7" stroke="#a8a6a2" strokeWidth="2.500" /></Ico>
        <Ico w={16}><path d="M0 8l8-7.500L16 8l-2 .5V16H2V8.500z" fill="#bdbab4" stroke="#9b9893" /><path d="M5 8.500h2.500V11H5zM10 9.500h2V16h-2z" fill="#8d8a86" /></Ico>
        <ThinSep />
      </NavTools>
      <NavHelp><HelpBall /><Caret w={5} color="#000" /></NavHelp>
    </NavRow>
    <IisMenu><T>文件(F)</T><T>视图(V)</T><T>帮助(H)</T></IisMenu>
    <Body>
      <Connections>
        <PanelHead><T bold>连接</T></PanelHead>
        <ConnTools>
          <Ico w={16}><g transform="scale(.8)"><GlobeArt /></g><path d="M8 10l6 5" stroke="#8c9399" strokeWidth="2.500" /></Ico>
          <Gap $w={3} /><Caret w={5} color="#000" /><Gap $w={6} />
          <Ico w={16}><path d="M.500.500h15v15H.500z" fill="#b6b4b0" stroke="#94928f" /><path d="M3.500 1h9v6h-9zM5 10h7v6H5z" fill="#dbd9d5" stroke="#9d9b98" /></Ico>
          <Gap $w={7} /><ThinSep /><Gap $w={4} />
          <FolderSmall><path d="M4 11c0-4 1-5 4-5M5 5l4-4 1 5z" fill="#49b837" stroke="#2d9120" strokeWidth="1.500" /></FolderSmall>
          <Gap $w={8} /><ThinSep /><Gap $w={4} />
          <Ico w={16}><g transform="translate(1 0) scale(.75)"><GlobeArt /></g><path d="M10 11l5 4" stroke="#8c9399" strokeWidth="2.500" /><circle cx="4" cy="12" r="3.800" fill="#c8201c" /><path d="M2.500 10.500l3 3M5.500 10.500l-3 3" stroke="#fff" /></Ico>
        </ConnTools>
        <TreeRow $pl={12}><Dots $w={10} /><ServerGlobe star /><T>起始页</T></TreeRow>
        <TreeRow $pl={7}><Expander /><Dots $w={5} /><ServerGlobe /><T>WIN-34VUR5F7M7H (WIN-34VUR5F7M7H\server)</T></TreeRow>
        <TreeRow $pl={31}><Dots $w={10} />
          <Ico w={16}><circle cx="10" cy="6" r="6" fill="url(#sea)" /><path d="M12 2c3 2 4 4 3 7l-3-2z" fill="#5db747" /><path d="M3 3h6l3 3v8H3z" fill="#f5f6f8" stroke="#7b8a9c" strokeWidth=".8" /><path d="M5 8h5M5 10.500h5" stroke="#8a8a8a" /><path d="M1 11c-1 5 13 6 12 1" stroke="#c9302a" strokeWidth="1.500" /></Ico>
          <T>应用程序池</T></TreeRow>
        <TreeRow $pl={26}><Expander /><Dots $w={5} /><FolderSmall><g transform="translate(4.500 6) scale(.48)"><GlobeArt /></g></FolderSmall><T>网站</T></TreeRow>
        <TreeRow $pl={45} $sel><Expander $plus /><Dots $w={5} /><Globe /><T>card</T></TreeRow>
      </Connections>
      <Center>
        <Page>
          <PageHead><Globe s={31} /><HeadText><T size={23} latin={22} ls={-1.2}>card 主页</T></HeadText></PageHead>
          <FilterBar>
            <T>筛选:</T>
            <Combo $w={121} $ml={5}><ComboArrow><Caret w={5} color="#000" /></ComboArrow></Combo>
            <Gap $w={2} />
            <Ico w={17} h={16}><path d="M2 2h5v12H.500V8zM10 2h5l1.500 6v6H10zM7 5h3v5H7z" fill="#a9a7a3" stroke="#8e8c89" /></Ico>
            <Gap $w={4} /><T color="#8d8b86">开始(G)</T><Gap $w={10} /><Caret w={5} color="#808080" /><Gap $w={4} />
            <Ico w={17} h={16}><rect x="1" y="1" width="11" height="11" fill="#fff" stroke="#8793a2" /><rect x="6.500" y="6.500" width="9.500" height="9" fill="#e6ecf4" stroke="#71839c" /><path d="M2 4v6h4M4 8l3 3-3 2" stroke="#1c83d8" strokeWidth="1.500" /><path d="M9 10h5M9 13h5" stroke="#4869a0" strokeDasharray="1 1" /></Ico>
            <Gap $w={2} /><T>全部显示(A)</T><Gap $w={10} /><ThinSep /><Gap $w={5} /><T>分组依据:</T>
            <Combo $w={115} $ml={5}><T>区域</T><ComboArrow><Caret w={5} color="#000" /></ComboArrow></Combo>
            <Gap $w={3} />
            <Ico w={16}><rect x=".500" y=".500" width="15" height="15" fill="#f3f5f8" stroke="#7b899b" /><path d="M1 2h14" stroke="#8fa2bb" strokeWidth="2" /><path d="M3 5h4v3H3z" stroke="#7d9a5c" /><path d="M9 5h4v3H9z" stroke="#5d92c8" /><path d="M3 10h4v3H3z" stroke="#7d6ab8" /><path d="M9 10h4v3H9z" stroke="#c07c74" /></Ico>
            <Gap $w={3} /><Caret w={5} color="#000" />
          </FilterBar>
          <Features>
            <FeatureList>
              <GroupHead><T bold>ASP.NET</T></GroupHead>
              <Grid>
                <F icon="compile" label=".NET 编译" /><F icon="error" /><F icon="pages" /><F icon="world" /><F icon="rules" />
                <F icon="profile" /><F icon="smtp" /><F icon="session" label="会话状态" /><F icon="machine" label="计算机密钥" />
                <F icon="none" label="连接字符串" />
              </Grid>
              <GroupHead><T bold>IIS</T></GroupHead>
              <Grid>
                {['a', 'b', 'c', 'd', 'e', 'f', 'g'].map(k => <F key={k} icon="none" />)}
                <F icon="error" label="错误页" /><F icon="modules" label="模块" />
                <F icon="document" label="默认文档" /><F icon="browse" label="目录浏览" /><F icon="filter" label="请求筛选" />
                <F icon="log" label="日志" /><F icon="auth" label="身份验证" /><F icon="cache" label="输出缓存" /><F icon="compress" label="压缩" />
              </Grid>
              <GroupHead><T bold>管理</T></GroupHead>
              <Grid><F icon="config" /></Grid>
            </FeatureList>
            <Scroll>
              <ScrollButton><Ico w={9} h={5}><path d="M0 5h9L4.500 0z" fill="#000" /></Ico></ScrollButton>
              <Thumb />
              <Gap $grow />
              <ScrollButton><Caret w={9} color="#000" /></ScrollButton>
            </Scroll>
          </Features>
        </Page>
        <ViewTabs>
          <ViewTab $on><SmallPage /><T>功能视图</T></ViewTab>
          <ViewTab><FolderSmall><rect x="7.500" y="7.500" width="8" height="8" fill="#fff" stroke="#5784bd" /><path d="M9 10h5M9 13h5" stroke="#5784bd" /></FolderSmall><T>内容视图</T></ViewTab>
        </ViewTabs>
      </Center>
      <Actions>
        <PanelHead><T bold>操作</T></PanelHead>
        <Gap $h={4} />
        <A t="浏览" icon={<FolderSmall><circle cx="6" cy="9" r="3.500" fill="#cfe7fa" stroke="#5f7f9f" /><path d="M4 12l-3 3" stroke="#5f7f9f" strokeWidth="2" /></FolderSmall>} />
        <A t="编辑权限..." />
        <Rule $dark />
        <A t="编辑网站" bold />
        <A t="绑定..." />
        <A t="基本设置..." icon={<SmallPage />} />
        <Rule $dark />
        <A t="查看应用程序" />
        <A t="查看虚拟目录" />
        <Rule $dark />
        <SectionBar>
          <T bold>管理网站</T>
          <Ico w={20}><circle cx="10" cy="10" r="9.300" fill="#e6e5e3" stroke="#a3a19d" strokeWidth="1.300" /><path d="M5.500 12L10 8l4.500 4" stroke="#333" strokeWidth="2.300" /></Ico>
        </SectionBar>
        <A t="重新启动" icon={<Ico w={16}><path d="M3 6c1-4 6-4 9-2M10 .500L13.500 4 9 6M13 10c-1 4-6 4-9 2M6 15.500L2.500 12 7 10" stroke="#43b43b" strokeWidth="2.200" /></Ico>} />
        <A t="启动" off icon={<Ico w={16}><path d="M5 3l6 5-6 5z" fill="#b5b5b5" stroke="#8c8c8c" /></Ico>} />
        <A t="停止" icon={<Ico w={16}><rect x="3" y="3" width="10" height="10" rx="1" fill="#4b4b4b" stroke="#2a2a2a" /></Ico>} />
        <Rule />
        <A t="浏览网站" bold />
        <ActionRow $h={45}>
          <ActionIcon><SmallPage globe /></ActionIcon>
          <Lines>{['浏览', '192.168.65.133:80', '(http)'].map(l => <T key={l} color="#00007f">{l}</T>)}</Lines>
        </ActionRow>
        <Rule />
        <A t="高级设置..." />
        <Rule />
        <A t="配置" bold />
        <A t="限制..." />
        <Rule $dark />
        <A t="帮助" icon={<HelpBall />} />
        <A t="联机帮助" />
      </Actions>
    </Body>
    <IisStatus>
      <T>就绪</T>
      <Ico w={25} h={17}><g transform="scale(.6)"><GlobeArt /></g><g transform="translate(7 2) scale(.8)"><TowerArt /></g><path d="M22 9h2v2h-2zM22 14h2v2h-2zM17 14h2v2h-2z" fill="#8a8883" /></Ico>
    </IisStatus>
  </IisWindow>
);

const EditSite = () => (
  <Dialog>
    <WinTitle $active>
      <T bold>编辑网站</T>
      <WinButtons>
        <WinButton><Ico w={9} h={13}><path d="M1 4C1 0 8 0 8 3.500 8 6 4.500 6 4.500 9M4.500 10.500V13" stroke="#000" strokeWidth="2.200" /></Ico></WinButton>
        <WinButton $ml={2}><XGlyph s={10} /></WinButton>
      </WinButtons>
    </WinTitle>
    <Form>
      <FormRow $h={17}><Label $w={222} $off><T>网站名称(S):</T></Label><Label $off><T>应用程序池(L):</T></Label></FormRow>
      <FormRow $mt={2} $h={27}>
        <Field $w={213} $mr={10}><T>card</T></Field>
        <Field $w={212} $mr={9}><T>ASP.NET v4.0 Classic</T></Field>
        <Button $w={113}><T>选择(E)...</T></Button>
      </FormRow>
      <FormRow $mt={28} $h={17}><Label><T>物理路径(P):</T></Label></FormRow>
      <FormRow $mt={1} $h={27}>
        <Field $w={345} $mr={10} $edit><T>C:\inetpub\wwwroot\v7w</T><TextCursor /></Field>
        <Button $w={37}><T>..</T></Button>
      </FormRow>
      <FormRow $mt={1} $h={17}><Label><T>传递身份验证</T></Label></FormRow>
      <FormRow $mt={14}>
        <Button $w={147} $h={29} $mr={12}><T>连接为(C)...</T></Button>
        <Button $w={167} $h={29}><T>测试设置(G)...</T></Button>
      </FormRow>
      <FormRow $mt={22}>
        <Gap $w={335} />
        <Button $w={107} $mr={8} $default><T>确定</T></Button>
        <Button $w={107}><T>取消</T></Button>
      </FormRow>
    </Form>
  </Dialog>
);

const WindowsTaskbar = () => (
  <Taskbar>
    <TaskButton $w={57} $ml={0}>
      <Ico w={19} h={20}>
        <path d="M2 3c3-2 5-1 7 0L7.500 10c-2-1-4-1-7 0z" fill="#e8512a" /><path d="M10 3.500c3 1 5 1 8-1L16.500 9.500c-3 2-5 2-8 1z" fill="#7fb83a" />
        <path d="M.200 11c3-1 5-1 7 0L6 18c-2-1-4-1-7 0z" fill="#3f86d6" transform="translate(1 0)" /><path d="M8.500 11.500c3 1 5 1 8-1L15 17.500c-3 2-5 2-8 1z" fill="#f6c223" />
      </Ico>
      <T>开始</T>
    </TaskButton>
    <Groove $ml={7} />
    <Quick $ml={20}>
      <Ico w={38} h={41}>
        <path d="M1 1h9v34l-9-2z" fill="#9aa2a7" /><path d="M10 1h14v30l-14 6z" fill="url(#steel)" /><path d="M2 5h7M2 9h7M2 13h7" stroke="#e6eaec" strokeWidth="2" />
        <path d="M5 27l9-6 22 4-1 10-10 5-18-5z" fill="#7b8791" stroke="#525c65" /><path d="M5 27l20 5 11-7-22-4z" fill="#a3adb5" /><path d="M15 22c0-5 10-5 10 2" stroke="#33393e" strokeWidth="2" /><path d="M12 28v4M20 30v4" stroke="#dfe4e8" strokeWidth="1.500" />
      </Ico>
    </Quick>
    <Quick $ml={17}>
      <Ico w={38} h={30}>
        <path d="M9 1h27l-6 27H3z" fill="#3d94cf" stroke="#8ccbee" /><path d="M9 1h27l-3 12C24 10 14 12 6 16z" fill="#7dbfe6" opacity=".7" />
        <path d="M14 6l9 8-12 9" stroke="#fff" strokeWidth="2.800" /><path d="M20 23h8" stroke="#fff" strokeWidth="2.500" />
      </Ico>
    </Quick>
    <Quick $ml={20}>
      <Ico w={41} h={40}>
        <path d="M1 4l6-2 4 2h26l2 4v28H1z" fill="#e9d27e" stroke="#c7a950" /><path d="M5 4h8M15 7h8M25 9h8" stroke="#fff" strokeWidth="3" /><path d="M5 3h3" stroke="#3ea53a" strokeWidth="2" /><path d="M15 6h3" stroke="#d23a2c" strokeWidth="2" /><path d="M26 8h3" stroke="#2e7fd0" strokeWidth="2" />
        <path d="M1 12h38l-1 25H2z" fill="url(#folder)" stroke="#d5b85f" />
        <path d="M5 39V25h31v14h-7v-6H12v6z" fill="#79c3e6" stroke="#4b9ac4" /><path d="M6 25h29v4H6z" fill="#c0e6f6" />
      </Ico>
    </Quick>
    <TaskButton $w={56} $ml={8} $on>
      <Ico w={39} h={40}>
        <g transform="scale(1.650)"><GlobeArt /></g><g transform="translate(16 7) scale(2.150 2)"><TowerArt /></g>
        <path d="M1 1l10 1 4 5 4-2-2 9-9-4 4-1-4-5-6 1z" fill="#f3b229" stroke="#c98208" strokeWidth=".5" />
        <path d="M22 22c4 0 6-1 8-3 2 2 4 3 8 3 0 8-2 14-8 17-6-3-8-9-8-17z" fill="#2f6fc8" stroke="#e8e3cf" /><path d="M30 20v9h-8v-6c4 0 6-1 8-3zM30 29h7c-1 4-3 7-7 9z" fill="#f4c62c" />
      </Ico>
    </TaskButton>
    <TaskButton $w={57} $ml={2}><Ico w={41} vb="-2 0 60 60"><IeArt /></Ico></TaskButton>
    <Gap $grow />
    <Groove $ml={0} /><Gap $w={11} /><T>CH</T>
    <GrooveIn $ml={7} $h={26} />
    <Gap $w={6} />
    <Ico w={21} h={17}><path d="M3 6h15l2.500 10H.500z" fill="#ededeb" stroke="#777" /><path d="M3 9h15M2.500 11.500h16M2 14h17" stroke="#777" strokeDasharray="2 1" /><path d="M8 6c0-4 4 0 6-3l5-2" stroke="#777" /></Ico>
    <GrooveIn $ml={4} $h={26} /><Gap $w={7} /><HelpBall s={18} /><GrooveIn $ml={5} $h={26} />
    <Gap $w={4} />
    <Ico w={9} h={20}><path d="M3 3V.800h5.500V5H6M.500 3.500H6v4H.500z" stroke="#000" strokeWidth="1.200" /><path d="M2 15h5.500L4.700 18z" fill="#000" /></Ico>
    <Tray>
      <Ico w={7} h={10}><path d="M.500 4l3-3 3 3M.500 9l3-3 3 3" stroke="#000" strokeWidth="1.400" /></Ico>
      <Gap $w={14} />
      <Ico w={20} h={22}><path d="M2 1v20" stroke="#777" strokeWidth="2.500" /><path d="M3 3c5-3 7 3 10 1 2 0 4-1 6-1l-3 8c-5 2-6-3-13 0z" fill="#f8f8f8" stroke="#777" /></Ico>
      <Gap $w={9} />
      <Ico w={21} h={21}><rect x="7" y="5" width="13" height="11" fill="#9b9b99" stroke="#fff" strokeWidth="1.500" /><rect x="6" y="4" width="15" height="13" stroke="#666" /><path d="M9 19h9" stroke="#666" strokeWidth="2" /><path d="M1 1h6v6H1zM4 7v12h4" stroke="#666" strokeWidth="1.500" fill="#f6f6f6" /></Ico>
      <Gap $w={9} />
      <Ico w={20} h={21}><path d="M1 6h3l5-5v18l-5-5H1z" fill="#f6f6f6" stroke="#777" /><circle cx="13.500" cy="14.500" r="5.800" fill="#dd2a20" /><path d="M11 12l5 5M16 12l-5 5" stroke="#fff" strokeWidth="1.600" /></Ico>
      <Clock><T>19:43</T><T>2020/10/24</T></Clock>
      <Gap $w={2} />
      <Ico w={18} h={15}><path d="M2 0h16l-1 13H0z" fill="#2f6fd2" stroke="#a9c6ee" strokeWidth=".8" /><path d="M2 1h15L3 9z" fill="#7fb0f0" opacity=".7" /></Ico>
    </Tray>
  </Taskbar>
);

const dot = <circle cx="16" cy="16" r="3.200" fill="#7cc91e" />;
const hostStatusIcons: [string, string, boolean][] = [
  ['M1 11.500L4.500 3h11.500l3 8.500V16H1zM1 11.500h18', ink, true],
  ['M10 1.500a8.500 8.500 0 1 0 .1 0M10 8a2 2 0 1 0 .1 0M5 5l2 2M13 13l2 2', '#a9afb4', false],
  ['M1 2h10v7H1zM9 6h9v7H9zM3 12v6h9', ink, true],
  ['M5 7V2h9v5M5 14H1.500V7h16v7H14M5 11h9v7H5z', '#a9afb4', false],
  ['M1 7h3l5-4.500v14L4 12H1zM12 6c1.500 2 1.500 5 0 7M15 4c2.500 3 2.500 8 0 11', ink, true],
  ['M9.500 2a7.500 7.500 0 1 0 .1 0M9.500 6a3.500 3.500 0 1 0 .1 0M9.500 9v1.500M4 18h11', '#a9afb4', false],
];

export default function App() {
  return (
    <Host>
      <Global />
      <Defs />
      <HostTitle>
        <VmLogo />
        <T ui size={15} latin={15.8}>检材3.E01 - VMware Workstation</T>
        <HostControls>
          <Ico w={12}><path d="M0 6.500h12" stroke="#fff" /></Ico>
          <Ico w={12}><path d="M.500 3.500h8v8h-8zM3 3V.500h8.500V9H9" stroke="#fff" /></Ico>
          <XGlyph s={12} color="#fff" w={1} />
        </HostControls>
      </HostTitle>
      <HostToolbar />
      <TabStrip>
        {tabs.map(t => (
          <Tab key={t.name} $w={t.w} $on={t.on}>
            <VmTabIcon />
            <T ui bold={t.on} size={15} latin={t.on ? 14 : 13.2} ls={t.on ? 0 : -0.5}>{t.name}</T>
            <XGlyph s={10} color="#bdbdbd" w={1.8} />
          </Tab>
        ))}
      </TabStrip>
      <Guest>
        <Desktop>
          <DeskIcon $top={7}><RecycleBin /><DeskLabel><T>回收站</T></DeskLabel></DeskIcon>
          <DeskIcon $top={137}><DesktopIe /><DeskLabel $mt={3}><T>Internet</T><T>Explorer</T></DeskLabel></DeskIcon>
          <DeskIcon $top={271}><DesktopCmd /><DeskLabel><T>命令提示符</T></DeskLabel></DeskIcon>
          <IisManager />
          <EditSite />
          <RedBox $x={673} $y={346} $w={214} $h={59} />
          <RedBox $x={1495} $y={225} $w={106} $h={29} />
          <Arrow width="1914" height="832" viewBox="3 118 1914 832">
            <path d="M903.300 480.700l21.500-14.700 1.300 6.400L1496 373.300 927 482l1 6z" fill="url(#tail)" />
          </Arrow>
        </Desktop>
        <WindowsTaskbar />
      </Guest>
      <HostStatus>
        <T ui size={15} latin={15}>要将输入定向到该虚拟机，请将鼠标指针移入其中或按 Ctrl+G。</T>
        <StatusIcons>
          {hostStatusIcons.map(([d, c, on], i) => (
            <Ico key={i} w={20}><path d={d} stroke={c} strokeWidth="1.500" />{on && dot}</Ico>
          ))}
          <StatusSep />
          <Ico w={18}><path d="M.800.800h16.400V12l-5 5.200H.800z" fill="#32dcc0" stroke="#31586b" strokeWidth="1.500" /><path d="M12 17v-5h5" fill="#e6f7f4" stroke="#31586b" /></Ico>
        </StatusIcons>
      </HostStatus>
    </Host>
  );
}
